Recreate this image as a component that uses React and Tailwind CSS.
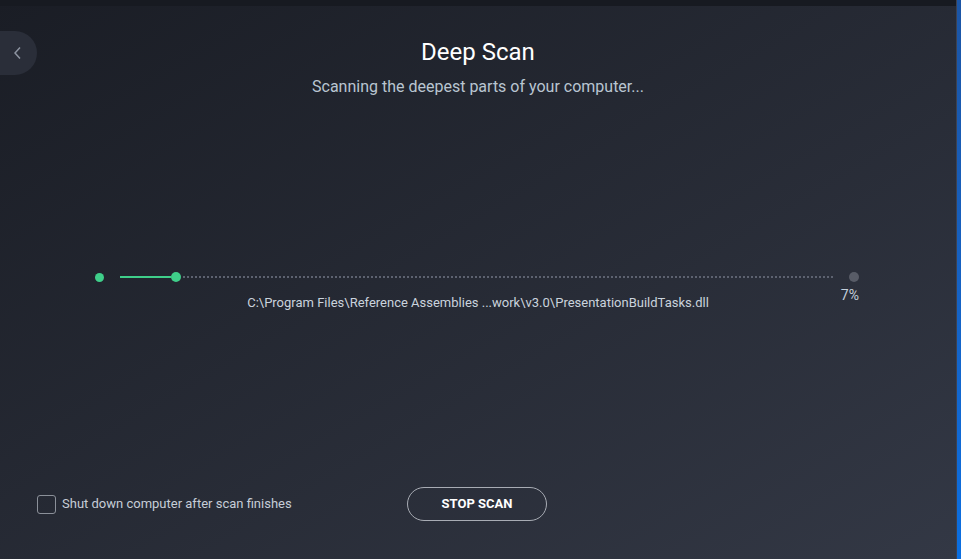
import React, { useState } from "react";

const App = () => {
  const [shutdown, setShutdown] = useState(false);
  const percent = 7;

  return (
    <div className="flex h-[559px] w-full overflow-hidden font-['Roboto','Liberation_Sans',sans-serif]">
      {/* Main panel */}
      <div className="flex flex-1 flex-col bg-linear-to-br from-[#1a1d25] to-[#333845]">
        <div className="h-[6px] bg-[#171a21]"></div>

        {/* Header */}
        <div className="grid grid-cols-[37px_1fr_37px] pt-[25px]">
          <button className="flex h-[44px] w-[37px] items-center justify-center rounded-r-full bg-[#2a2e39] pr-[3px]">
            <svg width="7" height="12" viewBox="0 0 7 12" fill="none">
              <polyline points="6,0.5 1,6 6,11.5" stroke="#8d94a1" strokeWidth="1.5" />
            </svg>
          </button>
          <div className="flex flex-col items-center">
            <h1 className="mt-[7px] text-[24px] leading-[28px] text-white">Deep Scan</h1>
            <p className="mt-[11px] text-[16px] leading-[20px] text-[#b9c5d1]">
              Scanning the deepest parts of your computer...
            </p>
          </div>
          <div></div>
        </div>

        {/* Progress */}
        <div className="ml-[95px] mt-[174px] flex h-[12px] w-[764px] items-center">
          <span className="h-[9px] w-[9px] rounded-full bg-[#3fcf8a]"></span>
          <span className="ml-[16px] h-[2px] w-[51px] bg-[#3fcf8a]"></span>
          <span className="h-[10px] w-[10px] rounded-full bg-[#3fcf8a]"></span>
          <span className="ml-[2px] mr-[16px] h-[2px] flex-1 bg-[repeating-linear-gradient(90deg,#5d6270_0_2px,transparent_2px_4px)]"></span>
          <span className="h-[10px] w-[10px] rounded-full bg-[#585c67]"></span>
        </div>
        <div className="grid grid-cols-[1fr_auto_1fr]">
          <div></div>
          <p className="mt-[12px] text-[13px] leading-[16px] text-[#cad3dd]">
            C:\Program Files\Reference Assemblies ...work\v3.0\PresentationBuildTasks.dll
          </p>
          <p className="mt-[3px] pr-[97px] text-right text-[14px] leading-[18px] text-[#c3cfdb]">{percent}%</p>
        </div>

        {/* Footer */}
        <div className="mt-auto grid grid-cols-[1fr_auto_1fr] items-center pb-[38px]">
          <label className="flex cursor-pointer items-center pl-[37px]">
            <input
              type="checkbox"
              checked={shutdown}
              onChange={() => setShutdown(!shutdown)}
              className="h-[19px] w-[19px] appearance-none rounded-[3px] border border-[#8b9099] bg-transparent"
            />
            <span className="ml-[6px] text-[13px] leading-[16px] text-[#c6cdd7]">
              Shut down computer after scan finishes
            </span>
          </label>
          <button className="mr-[2px] h-[34px] w-[140px] rounded-full border border-[#a8acb4] text-[13px] font-bold text-white">
            STOP SCAN
          </button>
          <div></div>
        </div>
      </div>

      {/* Right edge */}
      <div className="w-px bg-[#3d4250]"></div>
      <div className="w-[4px] bg-linear-to-b from-[#1b55a5] to-[#0a6fe2]"></div>
    </div>
  );
};

export default App;
